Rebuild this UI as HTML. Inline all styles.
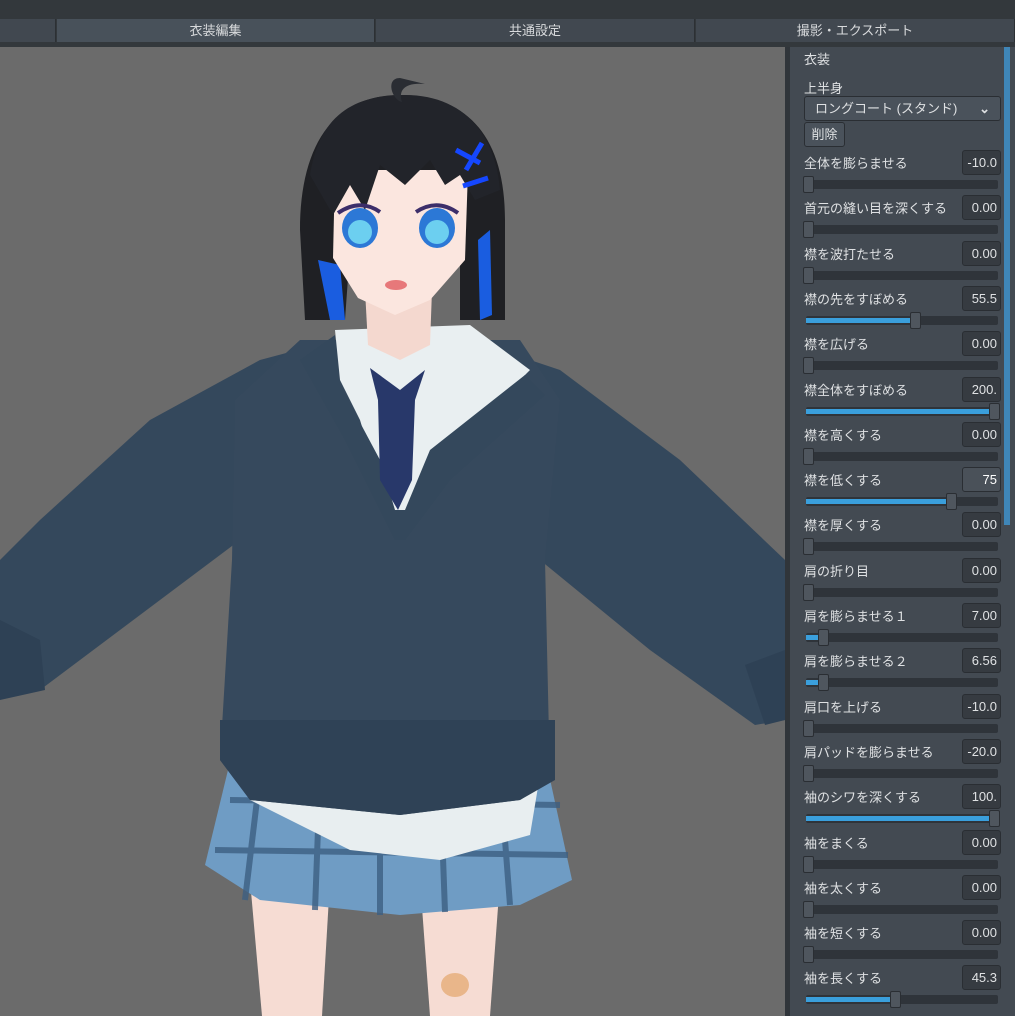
<!DOCTYPE html>
<html><head><meta charset="utf-8"><style>
*{margin:0;padding:0;box-sizing:border-box}
body{width:1015px;height:1016px;overflow:hidden;background:#6b6b6b;font-family:"Liberation Sans","Noto Sans CJK JP",sans-serif;position:relative}
.top{position:absolute;left:0;top:0;width:1015px;height:47px;background:#33383c}
.tab{position:absolute;top:19px;height:23px;background:#414850;color:#d8dadc;font-size:13px;text-align:center;line-height:23px;border-right:1px solid #2c3034}
.tab.a{background:#48515a}
.panel{position:absolute;left:785px;top:47px;width:230px;height:969px;background:#434a52;border-left:5px solid #30353a}
.sb{position:absolute;left:1004px;top:47px;width:6px;height:478px;background:#3f86b8}
.t{position:absolute;color:#dfe1e3;font-size:13px;white-space:nowrap}
.v{position:absolute;left:962px;width:39px;height:25px;background:#363b41;border:1px solid #2a2e33;border-radius:3px;color:#dfe1e3;font-size:13px;text-align:right;padding-right:3px;line-height:23px}
.tr{position:absolute;left:806px;width:192px;height:9px;background:#2f343a;border-radius:2px}
.f{position:absolute;left:806px;height:5px;background:#3a9fdc}
.th{position:absolute;width:11px;height:17px;background:#4f565e;border:1px solid #2a2e33;border-radius:2px}
</style></head><body>
<svg style="position:absolute;left:0;top:0" width="785" height="1016" viewBox="0 0 785 1016">
<rect width="785" height="1016" fill="#6b6b6b"/>
<!-- legs -->
<path d="M250 880 L330 880 L322 1016 L262 1016 Z" fill="#f6dcd3"/>
<path d="M420 880 L500 880 L490 1016 L430 1016 Z" fill="#f6dcd3"/>
<ellipse cx="455" cy="985" rx="14" ry="12" fill="#e9b68a"/>
<!-- skirt -->
<path d="M228 770 L548 770 L572 880 L520 905 L400 915 L260 900 L205 865 Z" fill="#6f9cc4"/>
<g stroke="#3d5f82" stroke-width="6" opacity=".8">
<line x1="230" y1="800" x2="560" y2="805"/><line x1="215" y1="850" x2="568" y2="855"/>
<line x1="260" y1="775" x2="245" y2="900"/><line x1="320" y1="775" x2="315" y2="910"/><line x1="380" y1="775" x2="380" y2="915"/><line x1="440" y1="775" x2="445" y2="912"/><line x1="500" y1="775" x2="510" y2="905"/>
</g>
<!-- shirt hem -->
<path d="M240 775 L540 775 L530 835 L440 860 L350 850 L250 800 Z" fill="#e8eef0"/>
<!-- arms -->
<path d="M335 340 L260 360 L150 420 L40 520 L0 560 L0 690 L40 690 L120 630 L240 540 Z" fill="#34485c"/>
<path d="M0 620 L40 640 L45 690 L0 700 Z" fill="#2e4155"/>
<path d="M470 340 L560 370 L680 460 L785 560 L785 720 L755 725 L650 650 L540 560 Z" fill="#34485c"/>
<path d="M745 665 L785 650 L785 720 L765 725 Z" fill="#2e4155"/>
<!-- body -->
<path d="M300 340 L520 340 L560 400 L545 560 L550 780 L520 800 L400 815 L250 800 L220 760 L232 560 L235 400 Z" fill="#36495d"/>
<path d="M220 720 L555 720 L555 780 L520 800 L400 815 L250 800 L220 760 Z" fill="#2f4256"/>
<!-- shirt / collar -->
<path d="M335 330 L470 325 L530 370 L470 430 L410 520 L390 520 L360 420 L340 380 Z" fill="#e9eff1"/>
<path d="M335 335 L340 385 L380 460 L395 510 L405 510 L430 450 L525 375 L545 395 L450 480 L405 540 L395 540 L345 440 L300 360 Z" fill="#34485c"/>
<!-- tie -->
<path d="M370 368 L400 390 L425 370 L415 400 L412 480 L398 510 L380 480 L378 400 Z" fill="#28386a"/>
<!-- neck -->
<path d="M365 290 L432 290 L430 345 L400 360 L368 345 Z" fill="#f4d8cf"/>
<!-- hair back -->
<path d="M400 95 C330 95 300 150 300 230 L305 320 L345 320 L350 250 L460 250 L460 320 L505 320 L505 220 C505 140 470 95 400 95 Z" fill="#1f2024"/>
<path d="M318 260 L330 320 L345 320 L340 265 Z" fill="#1a5de0"/>
<path d="M478 240 L480 320 L492 315 L490 230 Z" fill="#1a5de0"/>
<!-- face -->
<path d="M335 170 L468 170 L465 260 L430 300 L395 315 L358 298 L333 258 Z" fill="#fbe6df"/>
<!-- bangs -->
<path d="M310 175 C320 110 360 95 405 95 C460 95 495 130 500 190 L475 200 L460 175 L445 185 L430 160 L405 185 L380 165 L365 210 L350 185 L333 215 Z" fill="#22242a"/>
<path d="M400 78 C385 78 392 100 402 102 C398 90 405 82 425 84 Z" fill="#2a2d33"/>
<!-- eyes -->
<ellipse cx="360" cy="228" rx="18" ry="20" fill="#2c78d6"/><ellipse cx="360" cy="232" rx="12" ry="12" fill="#6ccff0"/>
<ellipse cx="437" cy="228" rx="18" ry="20" fill="#2c78d6"/><ellipse cx="437" cy="232" rx="12" ry="12" fill="#6ccff0"/>
<path d="M338 213 Q360 198 380 212" stroke="#3c2e6a" stroke-width="4" fill="none"/>
<path d="M416 212 Q437 198 458 213" stroke="#3c2e6a" stroke-width="4" fill="none"/>
<ellipse cx="396" cy="285" rx="11" ry="5" fill="#e7787a"/>
<!-- hairclip -->
<path d="M456 150 L480 163 M482 143 L466 170 M463 186 L488 178" stroke="#1547ff" stroke-width="5"/>
</svg>
<div class="top"></div>
<div class="tab" style="left:0;width:56px"></div>
<div class="tab a" style="left:57px;width:318px">衣装編集</div>
<div class="tab" style="left:376px;width:319px">共通設定</div>
<div class="tab" style="left:696px;width:319px">撮影・エクスポート</div>
<div class="panel"></div>
<div class="sb"></div>
<div class="t" style="left:804px;top:49px">衣装</div>
<div class="t" style="left:804px;top:78px">上半身</div>
<div style="position:absolute;left:804px;top:96px;width:197px;height:25px;background:#4a525b;border:1px solid #2a2e33;border-radius:3px;color:#dfe1e3;font-size:13px;line-height:23px;padding-left:10px">ロングコート (スタンド)<span style="position:absolute;right:10px;top:0;font-weight:bold">&#8964;</span></div>
<div style="position:absolute;left:804px;top:122px;width:41px;height:25px;background:#4a525b;border:1px solid #2a2e33;border-radius:3px;color:#dfe1e3;font-size:13px;line-height:23px;text-align:center">削除</div>
<div id="rows"></div>
<script>
var r=[["全体を膨らませる","-10.0",0],["首元の縫い目を深くする","0.00",0],["襟を波打たせる","0.00",0],["襟の先をすぼめる","55.5",107],["襟を広げる","0.00",0],["襟全体をすぼめる","200.",186],["襟を高くする","0.00",0],["襟を低くする","75",143],["襟を厚くする","0.00",0],["肩の折り目","0.00",0],["肩を膨らませる１","7.00",15],["肩を膨らませる２","6.56",15],["肩口を上げる","-10.0",0],["肩パッドを膨らませる","-20.0",0],["袖のシワを深くする","100.",186],["袖をまくる","0.00",0],["袖を太くする","0.00",0],["袖を短くする","0.00",0],["袖を長くする","45.3",87]];
var h="";r.forEach(function(a,i){var y=150+i*45.3;
h+='<div class="t" style="left:804px;top:'+(y+3)+'px">'+a[0]+'</div>';
h+='<div class="v" style="top:'+y+'px;'+(i==7?'background:#4a5159;color:#fff':'')+'">'+a[1]+'</div>';
h+='<div class="tr" style="top:'+(y+30)+'px"></div>';
if(a[2]>0)h+='<div class="f" style="top:'+(y+32)+'px;width:'+a[2]+'px"></div>';
h+='<div class="th" style="left:'+(803+a[2])+'px;top:'+(y+26)+'px"></div>';});
document.getElementById("rows").innerHTML=h;
</script>
</body></html>
